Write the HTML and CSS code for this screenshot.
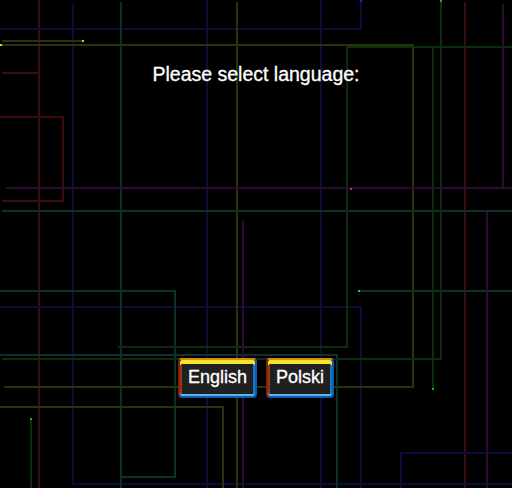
FILE: index.html
```html
<!DOCTYPE html>
<html lang="en">
<head>
    <meta charset="UTF-8">
    <meta name="viewport" content="width=device-width, initial-scale=1.0">
    <title>Language</title>
    <link rel="stylesheet" href="styles.css">
</head>
<body>
    <!-- circuit traces drawn behind the menu -->
    <svg class="circuit" width="512" height="488" viewBox="0 0 512 488">
        <g class="trace red">
            <path d="M39 0V488"/>
            <path d="M2 73H39"/>
            <path d="M0 117H63V201H2"/>
            <path d="M465 2V488"/>
        </g>
        <g class="trace blue">
            <path d="M73 4V484H512"/>
            <path d="M207 0V488"/>
            <path d="M0 29H361V0"/>
            <path d="M321 0V488"/>
            <path d="M0 307H361V488"/>
            <path d="M401 488V453H512"/>
        </g>
        <g class="trace teal">
            <path d="M121 2V488"/>
            <path d="M0 291H175V477H121"/>
            <path d="M2 211H512"/>
            <path d="M0 355H337V488"/>
            <path d="M359 291H512"/>
        </g>
        <g class="trace olive">
            <path d="M237 2V488"/>
            <path d="M2 41H83"/>
            <path d="M0 45H413V387H4"/>
            <path d="M0 407H223V488"/>
        </g>
        <g class="trace green">
            <path d="M512 47H347V347H118"/>
            <path d="M433 47V389"/>
            <path d="M441 0V359H2"/>
            <path d="M31 419V488"/>
        </g>
        <g class="trace purple">
            <path d="M503 4V188"/>
            <path d="M6 188H512"/>
            <path d="M487 212V488"/>
            <path d="M243 220V488"/>
        </g>
        <!-- end points -->
        <rect x="0" y="44" width="2" height="2" fill="#d8d800"/>
        <rect x="82" y="40" width="2" height="2" fill="#d8d800"/>
        <rect x="360" y="0" width="2" height="2" fill="#2020e0"/>
        <rect x="440" y="0" width="2" height="2" fill="#10c010"/>
        <rect x="350" y="188" width="2" height="2" fill="#c010c0"/>
        <rect x="358" y="290" width="2" height="2" fill="#10c0b0"/>
        <rect x="432" y="388" width="2" height="2" fill="#10c010"/>
        <rect x="30" y="418" width="2" height="2" fill="#10c010"/>
    </svg>

    <main class="menu">
        <h1 class="prompt">Please select language:</h1>
        <div class="choices">
            <button class="lang-btn">English</button>
            <button class="lang-btn">Polski</button>
        </div>
    </main>
</body>
</html>
```

FILE: styles.css
```css
body {
    margin: 0;
    width: 512px;
    height: 488px;
    overflow: hidden;
    background-color: #000;
    font-family: 'Liberation Sans', Arial, sans-serif;
    color: #fff;
    position: relative;
}
.circuit {
    position: absolute;
    top: 0;
    left: 0;
    shape-rendering: crispEdges;
}
.trace path {
    fill: none;
    stroke-width: 2;
}
.red path { stroke: #3a0c0c; }
.blue path { stroke: #0c0c3a; }
.teal path { stroke: #0c302e; }
.olive path { stroke: #2e300a; }
.green path { stroke: #0c2e0c; }
.purple path { stroke: #2c0c30; }

.menu {
    position: relative;
    display: flex;
    flex-direction: column;
    align-items: center;
    padding-top: 64px;
}
.prompt {
    margin: 0;
    font-size: 19.5px;
    font-weight: normal;
    line-height: 20px;
    color: #fff;
    -webkit-text-stroke: 0.3px #fff;
}
.choices {
    display: flex;
    gap: 9px;
    margin-top: 274px;
}
.lang-btn {
    box-sizing: border-box;
    height: 40px;
    display: flex;
    align-items: center;
    padding: 0 8px 2px 8px;
    font-family: 'Liberation Sans', Arial, sans-serif;
    font-size: 18px;
    color: #fff;
    -webkit-text-stroke: 0.3px #fff;
    background-color: #202020;
    border-style: solid;
    border-width: 2px;
    border-color: #d88a14 #0c5aa8 #0c5aa8 #7a2810;
    border-radius: 4px;
    box-shadow: inset 0 4px 0 #f8e428, inset 0 -2px 0 #58b4ec, inset 2px 0 0 #9a3612, inset -2px 0 0 #1a78c8;
    cursor: pointer;
}
```
